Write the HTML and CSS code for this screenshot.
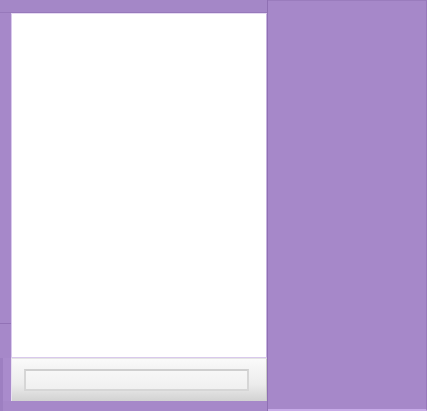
FILE: index.html
```html
<!DOCTYPE html>
<html>
<head>
<meta charset="utf-8">
<link rel="stylesheet" href="styles.css">
</head>
<body>
<div class="app">
  <div class="left">
    <div class="topbar"></div>
    <div class="middle">
      <div class="gutter"><div class="gutter-a"></div><div class="gutter-b"></div></div>
      <div class="panel"></div>
    </div>
    <div class="bottom">
      <div class="gutter2"></div>
      <div class="footer">
        <div class="field"></div>
      </div>
    </div>
    <div class="tail"></div>
  </div>
  <div class="right"></div>
</div>
</body>
</html>
```
FILE: styles.css
```css
html, body { margin: 0; padding: 0; }
body { background: #a688c9; font-family: "Liberation Sans", sans-serif; }
.app { display: flex; width: 427px; height: 411px; }
.left { width: 267px; display: flex; flex-direction: column; border-right: 1px solid #8f70b3; }
.topbar { height: 12px; border-bottom: 1px solid #9779bb; background: #a487c7; }
.middle { display: flex; height: 345px; }
.gutter { width: 11px; display: flex; flex-direction: column; }
.gutter-a { height: 310px; border-bottom: 1px solid #9272b6; }
.gutter-b { flex: 1; }
.panel { flex: 1; background: #fff; border: 1px solid #d9c9ec; border-top: 1px solid #e6daf3; border-right: 1px solid #c8b4e0; }
.bottom { display: flex; height: 43px; }
.gutter2 { width: 8px; border-left: 3px solid #9d7fc1; background: #a98bcc; }
.footer { flex: 1; background: linear-gradient(#fafafa, #ececec 60%, #d2d2d2); border-top: 1px solid #e4e4e4; border-left: 1px solid #e8e0f0; border-right: 1px solid #c9c9c9; padding: 10px 0 0 12px; box-sizing: border-box; }
.field { width: 225px; height: 22px; box-sizing: border-box; border: 2px solid #d6d6d6; border-top-color: #cfcfcf; background: linear-gradient(#f7f7f7, #f0f0f0); }
.tail { flex: 1; border-left: 3px solid #9d7fc1; }
.right { flex: 1; border-top: 1px solid #9a7cbd; border-right: 1px solid #9878bc; border-bottom: 2px solid #c7abe8; }
```
